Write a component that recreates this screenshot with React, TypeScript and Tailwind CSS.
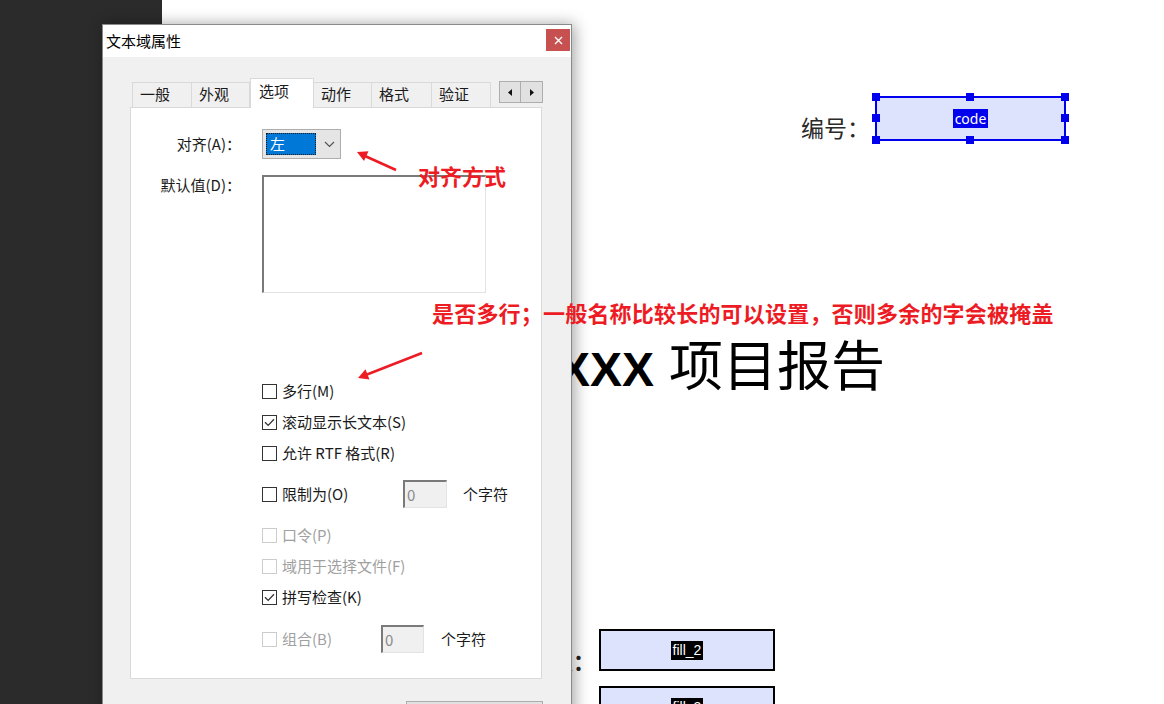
import type { ReactNode } from 'react';

// Text field properties dialog floating over a PDF form page

const cjk = "font-['Microsoft_YaHei','Noto_Sans_CJK_SC',sans-serif]";

function Box({ checked, disabled }: { checked?: boolean; disabled?: boolean }) {
  return (
    <span
      className={`flex h-[15px] w-[15px] shrink-0 items-center justify-center border bg-white ${
        disabled ? 'border-[#cccccc]' : 'border-[#333333]'
      }`}
    >
      {checked && (
        <svg width="11" height="9" viewBox="0 0 11 9">
          <path d="M1 4.2 L4.2 7.4 L10 1.2" fill="none" stroke="#333" strokeWidth="1.3" />
        </svg>
      )}
    </span>
  );
}

interface CheckProps {
  label: string;
  checked?: boolean;
  disabled?: boolean;
  width?: string;
  className?: string;
  children?: ReactNode;
}

function Check({ label, checked, disabled, width = '', className = '', children }: CheckProps) {
  return (
    <div className={`flex items-center ${className}`}>
      <div className={`flex items-center gap-[5px] ${width}`}>
        <Box checked={checked} disabled={disabled} />
        <span className={disabled ? 'text-[#a0a0a0]' : 'text-[#1a1a1a]'}>{label}</span>
      </div>
      {children}
    </div>
  );
}

function CountInput({ width }: { width: string }) {
  return (
    <div
      className={`flex h-[28px] items-center border-t-2 border-l-2 border-r border-b border-t-[#7a7a7a] border-l-[#7a7a7a] border-r-[#e3e3e3] border-b-[#e3e3e3] bg-[#f0f0f0] pl-[2px] text-[#8a8a8a] ${width}`}
    >
      0
    </div>
  );
}

const tabs = [
  { name: '一般', w: 'w-[60px]' },
  { name: '外观', w: 'w-[58px]' },
  { name: '选项', w: 'w-[64px]', active: true },
  { name: '动作', w: 'w-[58px]' },
  { name: '格式', w: 'w-[60px]' },
  { name: '验证', w: 'w-[59px]' },
];

function TabStrip() {
  return (
    <div className="flex h-[29px] items-end pl-[2px]">
      {tabs.map((t) =>
        t.active ? (
          <div
            key={t.name}
            className={`relative z-10 -mb-px flex h-[30px] items-center border border-b-0 border-[#d9d9d9] bg-white pl-[8px] pb-[4px] ${t.w}`}
          >
            {t.name}
          </div>
        ) : (
          <div
            key={t.name}
            className={`flex h-[25px] items-center border-t border-r border-[#d9d9d9] bg-[#f0f0f0] pl-[7px] pb-[2px] first:border-l ${t.w}`}
          >
            {t.name}
          </div>
        )
      )}
      <div className="mb-[4px] ml-[8px] flex">
        <span className="flex h-[22px] w-[22px] items-center justify-center border border-[#adadad] bg-[#e1e1e1]">
          <svg width="4" height="7" viewBox="0 0 4 7">
            <path d="M4 0 L0 3.5 L4 7 Z" fill="#111" />
          </svg>
        </span>
        <span className="flex h-[22px] w-[22px] items-center justify-center border border-l-0 border-[#adadad] bg-[#e1e1e1]">
          <svg width="4" height="7" viewBox="0 0 4 7">
            <path d="M0 0 L4 3.5 L0 7 Z" fill="#111" />
          </svg>
        </span>
      </div>
    </div>
  );
}

function OptionsPanel() {
  return (
    <div className="h-[572px] w-[412px] border border-[#d9d9d9] bg-white pt-[21px] text-[15px] leading-[20px]">
      <div className="flex h-[30px] items-center">
        <span className="w-[110px] text-right text-[#1a1a1a]">对齐(A)：</span>
        <div className="ml-[21px] flex h-[30px] w-[79px] items-center border border-[#adadad] bg-[#e5e5e5] pl-[3px]">
          <span className="flex h-[22px] w-[50px] items-center border border-dotted border-[#1a1a1a] bg-[#0078d7] pl-[3px] text-white">
            左
          </span>
          <svg className="ml-[8px]" width="11" height="7" viewBox="0 0 11 7">
            <path d="M1 1 L5.5 5.5 L10 1" fill="none" stroke="#555" strokeWidth="1.2" />
          </svg>
        </div>
      </div>

      <div className="mt-[16px] flex items-start">
        <span className="w-[110px] text-right text-[#1a1a1a]">默认值(D)：</span>
        <div className="ml-[21px] h-[118px] w-[224px] border-t-2 border-l-2 border-r border-b border-t-[#7a7a7a] border-l-[#7a7a7a] border-r-[#e3e3e3] border-b-[#e3e3e3] bg-white" />
      </div>

      <div className="ml-[131px] flex flex-col">
        <Check className="mt-[88px] h-[20px]" label="多行(M)" />
        <Check className="mt-[11px] h-[20px]" label="滚动显示长文本(S)" checked />
        <Check className="mt-[11px] h-[20px]" label="允许 RTF 格式(R)" />
        <Check className="mt-[17px] h-[28px]" label="限制为(O)" width="w-[141px]">
          <CountInput width="w-[44px]" />
          <span className="ml-[16px] text-[#1a1a1a]">个字符</span>
        </Check>
        <Check className="mt-[17px] h-[20px]" label="口令(P)" disabled />
        <Check className="mt-[11px] h-[20px]" label="域用于选择文件(F)" disabled />
        <Check className="mt-[11px] h-[20px]" label="拼写检查(K)" checked />
        <Check className="mt-[18px] h-[28px]" label="组合(B)" disabled width="w-[119px]">
          <CountInput width="w-[43px]" />
          <span className="ml-[17px] text-[#1a1a1a]">个字符</span>
        </Check>
      </div>
    </div>
  );
}

function PropertiesDialog() {
  return (
    <div
      className={`absolute left-[102px] top-[24px] flex h-[700px] w-[470px] flex-col border border-[#8a8a8a] bg-[#f0f0f0] shadow-[3px_0_14px_rgba(0,0,0,0.35)] ${cjk} text-[15px] text-[#1a1a1a]`}
    >
      <div className="flex h-[32px] shrink-0 items-start justify-between bg-white">
        <span className="mt-[6px] pl-[3px] text-[15px] leading-[20px] text-black">文本域属性</span>
        <button className="mr-[1px] mt-[4px] flex h-[22px] w-[24px] items-center justify-center bg-[#c75050]">
          <svg width="9" height="9" viewBox="0 0 9 9">
            <path d="M1 1 L8 8 M8 1 L1 8" stroke="#fff" strokeWidth="1.4" />
          </svg>
        </button>
      </div>

      <div className="flex flex-col pl-[27px] pt-[21px]">
        <TabStrip />
        <OptionsPanel />
        <div className="mt-[22px] flex w-[413px] items-start justify-between">
          <div className="flex items-center gap-[6px]">
            <span className="h-[15px] w-[16px] border border-[#8a8a8a] bg-[#d0d0d0]" />
            <span>锁定</span>
          </div>
          <button className="h-[26px] w-[137px] border border-[#adadad] bg-[#e1e1e1]">关闭</button>
        </div>
      </div>
    </div>
  );
}

function FormField({ label, dark }: { label: string; dark?: boolean }) {
  return (
    <div
      className={`flex h-full w-full items-center justify-center bg-[#dde3fc] ${
        dark ? 'border-2 border-black' : ''
      }`}
    >
      <span
        className={`px-[2px] text-[14px] leading-[19px] text-white ${
          dark ? "bg-black font-['Liberation_Sans_Narrow','Liberation_Sans',sans-serif]" : "bg-[#0000ee] font-['Noto_Sans',sans-serif]"
        }`}
      >
        {label}
      </span>
    </div>
  );
}

function Handle({ className }: { className: string }) {
  return <span className={`absolute h-[8px] w-[8px] bg-[#0000ee] ${className}`} />;
}

function Annotations() {
  return (
    <>
      <svg className="pointer-events-none absolute inset-0" width="1164" height="704" viewBox="0 0 1164 704">
        <line x1="396" y1="170" x2="365" y2="156" stroke="#ed1c24" strokeWidth="2.5" />
        <polygon points="357,152 368.5,151.2 364,161" fill="#ed1c24" />
        <line x1="422" y1="353" x2="367" y2="374.5" stroke="#ed1c24" strokeWidth="2.5" />
        <polygon points="358,378 369.5,379.5 365.5,369.3" fill="#ed1c24" />
      </svg>
      <span className={`absolute left-[418px] top-[162px] text-[22px] font-bold leading-[26px] text-[#ed1c24] ${cjk}`}>
        对齐方式
      </span>
      <span
        className={`absolute left-[432px] top-[299px] whitespace-nowrap text-[22px] font-bold leading-[26px] tracking-[0.2px] text-[#ed1c24] ${cjk}`}
      >
        是否多行；一般名称比较长的可以设置，否则多余的字会被掩盖
      </span>
    </>
  );
}

export default function App() {
  return (
    <div className="relative flex h-[704px] w-[1164px] overflow-hidden bg-white">
      <div className="h-full w-[162px] shrink-0 bg-[#2b2b2b]" />
      <div className="h-full flex-1 bg-white" />

      {/* page content of the form being edited */}
      <span className={`absolute left-[801px] top-[113px] text-[23px] leading-[28px] text-[#2a2a2a] ${cjk}`}>编号：</span>
      <div className="absolute left-[875px] top-[96px] h-[45px] w-[191px] border-2 border-[#0000ee]">
        <FormField label="code" />
        <Handle className="-left-[5px] -top-[5px]" />
        <Handle className="left-[89px] -top-[5px]" />
        <Handle className="-right-[5px] -top-[5px]" />
        <Handle className="-left-[5px] top-[16px]" />
        <Handle className="-right-[5px] top-[16px]" />
        <Handle className="-bottom-[5px] -left-[5px]" />
        <Handle className="-bottom-[5px] left-[89px]" />
        <Handle className="-bottom-[5px] -right-[5px]" />
      </div>

      <div className="absolute right-[279px] top-[336px] flex items-baseline gap-[15px] leading-none text-black">
        <span className="font-['Liberation_Sans',sans-serif] text-[48px] font-bold">XXX</span>
        <span className={`text-[54px] ${cjk}`}>项目报告</span>
      </div>

      <span className={`absolute right-[569px] top-[646px] text-[22px] font-bold leading-[28px] text-[#222] ${cjk}`}>
        负责人：
      </span>
      <div className="absolute left-[599px] top-[629px] h-[42px] w-[176px]">
        <FormField label="fill_2" dark />
      </div>
      <div className="absolute left-[599px] top-[686px] h-[42px] w-[176px]">
        <FormField label="fill_3" dark />
      </div>

      <PropertiesDialog />
      <Annotations />
    </div>
  );
}
